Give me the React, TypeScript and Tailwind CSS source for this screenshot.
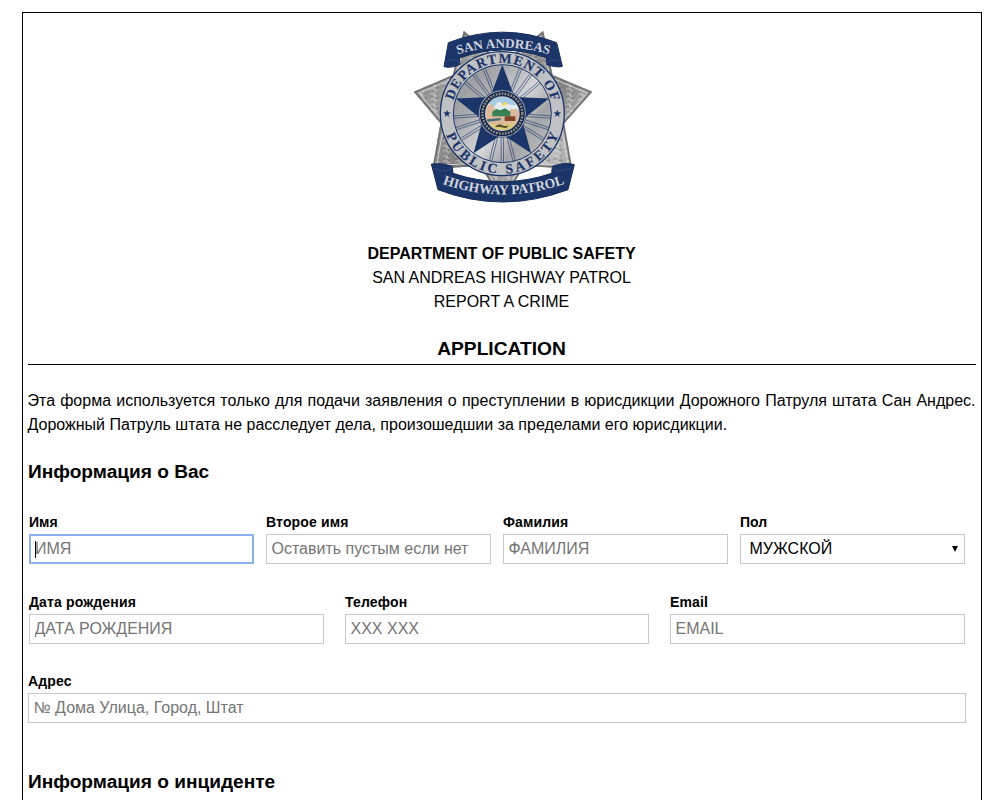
import React from "react";

const NAVY = "#1c3569";
const CX = 292;
const CY = 281;

function polar(r: number, deg: number): string {
  const a = (deg * Math.PI) / 180;
  return `${(CX + r * Math.sin(a)).toFixed(1)},${(CY - r * Math.cos(a)).toFixed(1)}`;
}

const innerStar = Array.from({ length: 10 }, (_, i) => polar(i % 2 ? 62 : 147, i * 36)).join(" ");
const spokes = [22, 36, 50, 94, 108, 122, 166, 180, 194, 238, 252, 266, 310, 324, 338];

function smallStar(cx: number, cy: number, r: number): string {
  return Array.from({ length: 10 }, (_, i) => {
    const a = (i * 36 * Math.PI) / 180;
    const q = i % 2 ? r * 0.4 : r;
    return `${(cx + q * Math.sin(a)).toFixed(1)},${(cy - q * Math.cos(a)).toFixed(1)}`;
  }).join(" ");
}

const BODY = "176,33 292,130 415,33 443,165 562,215 478,310 502,446 358,438 292,545 226,438 82,446 106,310 26,215 143,165";

function Badge() {
  return (
    <svg width="200" height="190" viewBox="0 0 600 570" className="block">
      <defs>
        <linearGradient id="steel" x1="0" y1="0" x2="1" y2="1">
          <stop offset="0" stopColor="#777" />
          <stop offset="0.3" stopColor="#a2a2a2" />
          <stop offset="0.55" stopColor="#777" />
          <stop offset="0.75" stopColor="#bdbdbd" />
          <stop offset="1" stopColor="#777" />
        </linearGradient>
        <linearGradient id="disc" x1="0" y1="0.1" x2="1" y2="0.9">
          <stop offset="0" stopColor="#929397" />
          <stop offset="0.25" stopColor="#a6a7ab" />
          <stop offset="0.55" stopColor="#d5d6d8" />
          <stop offset="0.75" stopColor="#a3a4a8" />
          <stop offset="1" stopColor="#c2c3c6" />
        </linearGradient>
        <pattern id="engrave" width="37" height="31" patternUnits="userSpaceOnUse">
          <path d="M2 8q7-9 12 0t11 0M3 24q5-10 10-2t18-3M17 2q-9 8 0 20" fill="none" stroke="#e2e2e2" strokeWidth="2" />
          <path d="M1 15q8-8 13 0t18 1M26 1q-8 9 3 26" fill="none" stroke="#777" strokeWidth="2" />
        </pattern>
        <path id="arcTop" d="M154 104Q292 62 436 104" />
        <path id="arcBottom" d="M111 491Q296 557 484 489" />
        <path id="ringTop" d="M140 281A152 152 0 0 1 444 281" />
        <path id="ringBottom" d="M112 281A180 180 0 0 0 472 281" />
        <clipPath id="sealClip"><circle cx="292" cy="281" r="50" /></clipPath>
      </defs>

      <polygon points={BODY} fill="url(#steel)" />
      <polygon points={BODY} fill="url(#engrave)" />
      <polygon points={BODY} fill="none" stroke="#d8d8d8" strokeWidth="3" transform="translate(18 17) scale(.94)" />
      <polygon points={BODY} fill="none" stroke="#727272" strokeWidth="5" transform="translate(5 5) scale(.983)" />

      <circle cx={CX} cy={CY} r="186" fill="#c0c1c4" stroke={NAVY} strokeWidth="4" />
      <circle cx={CX} cy={CY} r="147" fill="url(#disc)" stroke={NAVY} strokeWidth="3" />
      {spokes.map((a) => (
        <g key={a} transform={`rotate(${a} ${CX} ${CY})`}>
          <path d="M288.5 210V135M295.5 210V135" stroke={NAVY} strokeWidth="1.7" />
        </g>
      ))}
      <polygon points={innerStar} fill={NAVY} />

      <circle cx={CX} cy={CY} r="71" fill="#c8c9c8" stroke={NAVY} strokeWidth="2" />
      <circle cx={CX} cy={CY} r="60" fill="none" stroke="#172a54" strokeWidth="16" />
      <circle cx={CX} cy={CY} r="60" fill="none" stroke="#9c977e" strokeWidth="7" strokeDasharray="5 4" />
      <g clipPath="url(#sealClip)">
        <rect x="240" y="230" width="104" height="104" fill="#a6cbe4" />
        <circle cx="300" cy="256" r="9" fill="#f3d459" />
        <path d="M240 252q12-8 18 4t16-4 20 6l14-6 16 4 20-4v26H240z" fill="#e4ecee" />
        <path d="M240 260l20-8 18 24 22 7 18-16 28 2v72H240z" fill="#dcb99b" />
        <path d="M262 275l12-8 12 4 14-6 16 10v14h-54z" fill="#398156" />
        <path d="M245 298l42-4v7l-42 5z" fill="#4e6c76" />
        <path d="M299 289h32v14h-32z" fill="#814329" />
        <path d="M240 309l36 7 68-9v27H240z" fill="#d9ca7c" />
        <path d="M270 321q10-12 20-6t22 1l-9 9-18-4z" fill="#58512e" />
      </g>

      <polygon points={smallStar(126, 281, 12)} fill={NAVY} />
      <polygon points={smallStar(457, 281, 12)} fill={NAVY} />

      <g fontFamily="Liberation Serif, serif" fontWeight="700" fill={NAVY} stroke={NAVY} strokeWidth="0.6" fontSize="41">
        <text><textPath href="#ringTop" startOffset="40" textLength="400" lengthAdjust="spacing">DEPARTMENT OF</textPath></text>
        <text><textPath href="#ringBottom" startOffset="65" textLength="436" lengthAdjust="spacing">PUBLIC SAFETY</textPath></text>
      </g>

      <path d="M130 68Q292 5 455 68L472 139Q460 144 425 134L423 113Q292 67 163 114L165 133Q140 146 117 140Z" fill={NAVY} stroke="#172c59" strokeWidth="3" />
      <path d="M165 133q-8-20-38-11M423 134q8-20 39-12" fill="none" stroke="#405584" strokeWidth="2" />
      <path d="M79 432Q110 427 142 439L144 460Q292 510 440 460L442 439Q480 425 508 434L489 509Q292 583 99 509Z" fill={NAVY} stroke="#172c59" strokeWidth="3" />
      <path d="M142 440q-9 23-57 5M442 440q10 23 57 3" fill="none" stroke="#405584" strokeWidth="2" />
      <g fontFamily="Liberation Serif, serif" fontWeight="700" fill="#d2d5dc">
        <text fontSize="39"><textPath href="#arcTop" startOffset="4" textLength="278" lengthAdjust="spacingAndGlyphs">SAN ANDREAS</textPath></text>
        <text fontSize="41"><textPath href="#arcBottom" startOffset="2" textLength="374" lengthAdjust="spacingAndGlyphs">HIGHWAY PATROL</textPath></text>
      </g>
    </svg>
  );
}

const INPUT =
  "block h-[30px] w-full border border-[#c8c8c8] bg-white px-[4.5px] text-base text-black outline-none placeholder:text-[#757575]";

function Field({ label, placeholder, className }: { label: string; placeholder: string; className: string }) {
  return (
    <label className={className}>
      <span className="block h-6 text-sm leading-6 font-bold tracking-[0.15px]">{label}</span>
      <input className={INPUT} placeholder={placeholder} />
    </label>
  );
}

export default function App() {
  return (
    <div className="h-[800px] overflow-hidden bg-white pt-3 pl-[22px] font-['Liberation_Sans',Arial,sans-serif] text-base leading-6 text-black">
      <main className="h-[900px] w-[960px] border border-black px-[5px]">
        <header className="flex flex-col items-center border-b border-black pt-[7px]">
          <div className="ml-[5px]">
            <Badge />
          </div>
          <div className="mt-8 mr-px text-center">
            <p className="font-bold">DEPARTMENT OF PUBLIC SAFETY</p>
            <p>SAN ANDREAS HIGHWAY PATROL</p>
            <p>REPORT A CRIME</p>
          </div>
          <h1 className="mt-[23px] mr-px h-[27px] text-[19.2px] leading-6 font-bold">APPLICATION</h1>
        </header>
        <p className="mt-6 mr-[0.5px] -ml-[0.5px] text-justify">
          Эта форма используется только для подачи заявления о преступлении в юрисдикции Дорожного Патруля штата Сан
          Андрес. Дорожный Патруль штата не расследует дела, произошедшии за пределами его юрисдикции.
        </p>
        <h2 className="mt-[23px] text-[19.1px] leading-6 font-bold">Информация о Вас</h2>

        <div className="mt-[26px] ml-px flex gap-3">
          <label className="w-[225px]">
            <span className="block h-6 text-sm leading-6 font-bold">Имя</span>
            <span className="flex h-[30px] items-center border-2 border-[#8eb0ee] bg-white pl-1">
              <span className="h-[17px] w-px bg-black" />
              <input
                className="-ml-px w-[200px] bg-transparent text-base outline-none placeholder:text-[#757575]"
                placeholder="ИМЯ"
              />
            </span>
          </label>
          <Field className="w-[225px]" label="Второе имя" placeholder="Оставить пустым если нет" />
          <Field className="w-[225px]" label="Фамилия" placeholder="ФАМИЛИЯ" />
          <div className="w-[225px]">
            <span className="block h-6 text-sm leading-6 font-bold">Пол</span>
            <button className="flex h-[30px] w-full items-center justify-between border border-[#c8c8c8] bg-white pr-1.5 pl-[8.5px]">
              <span>МУЖСКОЙ</span>
              <svg width="6" height="6" viewBox="0 0 6 6">
                <path d="M0 0H6L3 6Z" fill="#000" />
              </svg>
            </button>
          </div>
        </div>

        <div className="mt-[26px] ml-px flex gap-[21px]">
          <Field className="w-[295px]" label="Дата рождения" placeholder="ДАТА РОЖДЕНИЯ" />
          <Field className="w-[304px]" label="Телефон" placeholder="XXX XXX" />
          <Field className="w-[295px]" label="Email" placeholder="EMAIL" />
        </div>

        <div className="mt-[25px] flex">
          <Field className="w-[938px]" label="Адрес" placeholder="№ Дома Улица, Город, Штат" />
        </div>
        <h2 className="mt-[47px] text-[19.1px] leading-6 font-bold">Информация о инциденте</h2>
      </main>
    </div>
  );
}
